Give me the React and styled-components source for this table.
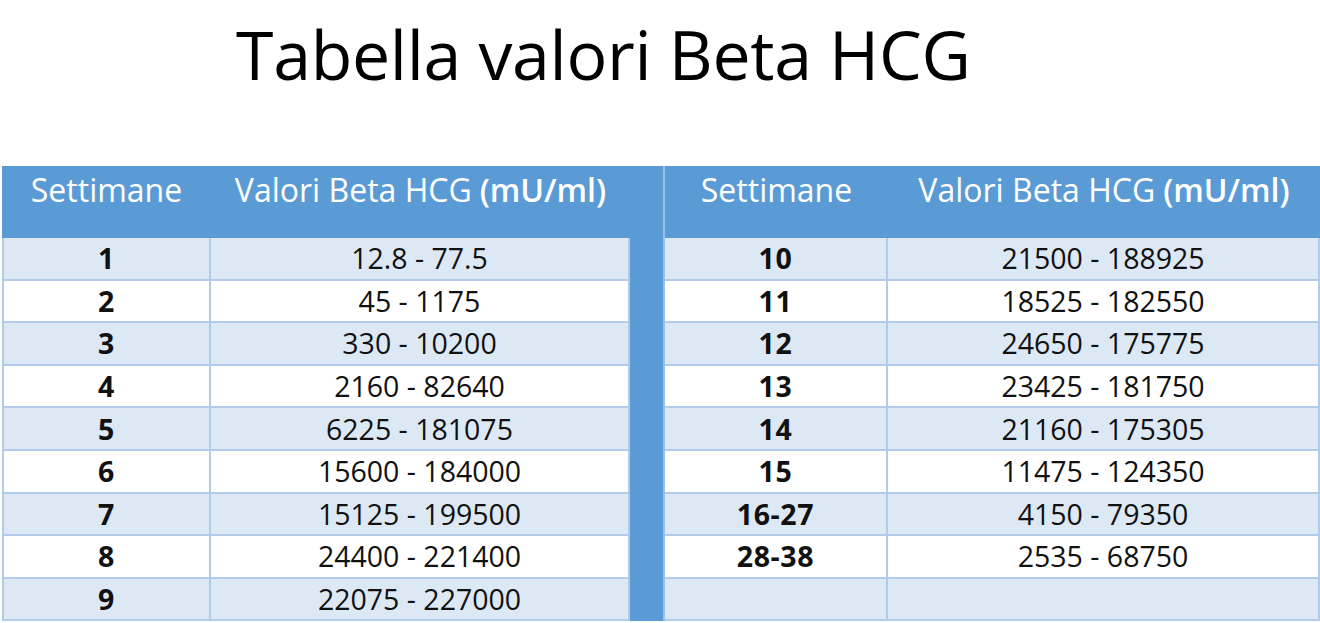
import React from 'react';
import styled, { createGlobalStyle } from 'styled-components';

const GlobalStyle = createGlobalStyle`
  html, body {
    margin: 0;
    padding: 0;
    background: #ffffff;
  }
  body {
    font-family: "Open Sans", "Noto Sans", sans-serif;
    color: #000;
  }
`;

const Page = styled.div`
  width: 1320px;
  height: 623px;
  overflow: hidden;
  background: #fff;
`;

const Title = styled.h1`
  margin: 0;
  padding: 14px 0 0 236px;
  height: 166px;
  box-sizing: border-box;
  font-family: "Open Sans", sans-serif;
  font-weight: 400;
  font-size: 68px;
  line-height: 80px;
  letter-spacing: -0.3px;
  color: #000;
`;

const Grid = styled.div`
  margin-left: 2px;
  display: grid;
  grid-template-columns: 209px 419px 35px 223px 1fr;
  grid-template-rows: 72px repeat(9, 42.6px);
`;

const HeadCell = styled.div`
  background: #5b9bd5;
  color: #fff;
  font-size: 32px;
  line-height: 42px;
  font-weight: 400;
  display: flex;
  justify-content: center;
  align-items: flex-start;
  padding-top: 3px;
  box-sizing: border-box;
  border-right: ${(p) => (p.$divider ? '2px solid #9cc2e8' : 'none')};
  white-space: nowrap;
`;

const Unit = styled.span`
  font-weight: 600;
  margin-left: 8px;
`;

const Bar = styled.div`
  grid-column: 3;
  grid-row: 2 / span 9;
  background: #5b9bd5;
  border-right: 2px solid #9cc2e8;
`;

const Cell = styled.div`
  background: ${(p) => (p.$shaded ? '#dde8f5' : '#ffffff')};
  border-bottom: 2px solid #b3cbea;
  border-right: 2px solid #b3cbea;
  border-left: ${(p) => (p.$edge ? '2px solid #b3cbea' : 'none')};
  box-sizing: border-box;
  display: flex;
  align-items: center;
  justify-content: center;
  font-size: 28.5px;
  font-weight: ${(p) => (p.$bold ? 700 : 400)};
  letter-spacing: ${(p) => (p.$bold ? '0.6px' : '0')};
  color: #111;
`;

const left = [
  ['1', '12.8 - 77.5'],
  ['2', '45 - 1175'],
  ['3', '330 - 10200'],
  ['4', '2160 - 82640'],
  ['5', '6225 - 181075'],
  ['6', '15600 - 184000'],
  ['7', '15125 - 199500'],
  ['8', '24400 - 221400'],
  ['9', '22075 - 227000'],
];

const right = [
  ['10', '21500 - 188925'],
  ['11', '18525 - 182550'],
  ['12', '24650 - 175775'],
  ['13', '23425 - 181750'],
  ['14', '21160 - 175305'],
  ['15', '11475 - 124350'],
  ['16-27', '4150 - 79350'],
  ['28-38', '2535 - 68750'],
  ['', ''],
];

export default function App() {
  return (
    <Page>
      <GlobalStyle />
      <Title>Tabella valori Beta HCG</Title>
      <Grid>
        <HeadCell>Settimane</HeadCell>
        <HeadCell>
          Valori Beta HCG<Unit>(mU/ml)</Unit>
        </HeadCell>
        <HeadCell $divider />
        <HeadCell>Settimane</HeadCell>
        <HeadCell>
          Valori Beta HCG<Unit>(mU/ml)</Unit>
        </HeadCell>
        <Bar />
        {left.map(([week, range], i) => (
          <React.Fragment key={'l' + i}>
            <Cell $shaded={i % 2 === 0} $bold $edge style={{ gridColumn: 1, gridRow: i + 2 }}>
              {week}
            </Cell>
            <Cell $shaded={i % 2 === 0} style={{ gridColumn: 2, gridRow: i + 2 }}>
              {range}
            </Cell>
          </React.Fragment>
        ))}
        {right.map(([week, range], i) => (
          <React.Fragment key={'r' + i}>
            <Cell $shaded={i % 2 === 0} $bold style={{ gridColumn: 4, gridRow: i + 2 }}>
              {week}
            </Cell>
            <Cell $shaded={i % 2 === 0} style={{ gridColumn: 5, gridRow: i + 2 }}>
              {range}
            </Cell>
          </React.Fragment>
        ))}
      </Grid>
    </Page>
  );
}
